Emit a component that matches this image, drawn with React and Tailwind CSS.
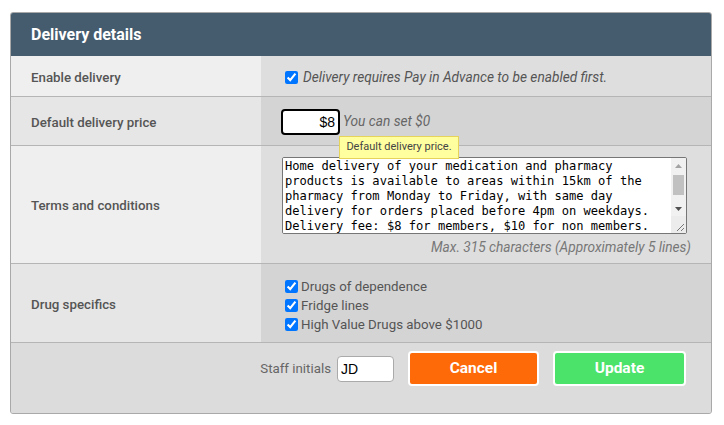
import { useState } from "react";

const terms =
  "Home delivery of your medication and pharmacy products is available to areas within 15km of the pharmacy from Monday to Friday, with same day delivery for orders placed before 4pm on weekdays. Delivery fee: $8 for members, $10 for non members. Orders over $100 are delivered free of charge to all customers.";

const App = () => {
  const [enabled, setEnabled] = useState(true);
  const [price, setPrice] = useState("$8");
  const [text, setText] = useState(terms);
  const [initials, setInitials] = useState("JD");
  const [drugs, setDrugs] = useState({
    dependence: true,
    fridge: true,
    highValue: true,
  });

  const toggle = (key) => setDrugs({ ...drugs, [key]: !drugs[key] });

  return (
    <div className="min-h-[425px] bg-white pt-[12px] pl-[10px] font-['Roboto',sans-serif]">
      <div className="w-[702px] rounded-[3px] border border-[#a9a9a9] overflow-hidden bg-[#dcdcdc]">
        {/* Header */}
        <div className="h-[43px] bg-[#455b6e] flex items-center px-[20px]">
          <h2 className="text-white text-[16px] font-bold">Delivery details</h2>
        </div>

        {/* Enable delivery */}
        <div className="flex h-[41px] border-b border-[#b5b5b5]">
          <div className="w-[250px] bg-[#efefef] flex items-center px-[20px] pt-[3px] text-[13.3px] font-medium text-[#555]">
            Enable delivery
          </div>
          <div className="flex-1 bg-[#dedede] flex items-center pl-[20px] pt-[3px]">
            <input
              type="checkbox"
              checked={enabled}
              onChange={() => setEnabled(!enabled)}
              className="w-[13px] h-[13px] ml-[4px] mr-[5px] accent-[#0075ff]"
            />
            <span className="text-[13.7px] italic text-[#555]">
              Delivery requires Pay in Advance to be enabled first.
            </span>
          </div>
        </div>

        {/* Default delivery price */}
        <div className="flex h-[49px] border-b border-[#b5b5b5]">
          <div className="w-[250px] bg-[#e6e6e6] flex items-center px-[20px] pt-[3px] text-[13.3px] font-medium text-[#555]">
            Default delivery price
          </div>
          <div className="flex-1 bg-[#d4d4d4] flex items-center pl-[20px] pt-[1px]">
            <div className="relative">
              <input
                value={price}
                onChange={(e) => setPrice(e.target.value)}
                className="w-[59px] h-[26px] rounded-[4px] border-2 border-black bg-white text-right pr-[3px] text-[14px] text-black font-['Liberation_Sans',Arial,sans-serif] outline-none"
              />
              <div className="absolute left-[58px] top-[27px] z-10 w-[120px] h-[23px] bg-[#ffffa0] border border-[#e6d45a] flex items-center justify-center text-[11px] text-[#444] whitespace-nowrap">
                Default delivery price.
              </div>
            </div>
            <span className="ml-[3px] text-[13.7px] italic text-[#666]">You can set $0</span>
          </div>
        </div>

        {/* Terms and conditions */}
        <div className="flex h-[118px] border-b border-[#b5b5b5]">
          <div className="w-[250px] bg-[#efefef] flex items-center px-[20px] pt-[2px] text-[13.3px] font-medium text-[#555]">
            Terms and conditions
          </div>
          <div className="flex-1 bg-[#dedede] pl-[21px] pr-[20px] pt-[11px] flex flex-col">
            <div className="w-[405px] h-[77px] border border-[#767676] rounded-[2px] bg-white flex overflow-hidden">
              <textarea
                value={text}
                onChange={(e) => setText(e.target.value)}
                spellCheck={false}
                className="flex-1 h-full resize-none overflow-hidden bg-white px-[2px] py-[1px] text-[12.1px] leading-[15px] text-black font-['DejaVu_Sans_Mono',monospace] outline-none"
              />
              {/* scrollbar */}
              <div className="w-[15px] flex flex-col bg-[#f1f1f1]">
                <div className="h-[15px] flex items-center justify-center">
                  <svg width="7" height="4" viewBox="0 0 7 4">
                    <path d="M3.5 0 L7 4 L0 4 Z" fill="#a3a3a3" />
                  </svg>
                </div>
                <div className="h-[28px] px-[2px] pt-[2px]">
                  <div className="h-[20px] bg-[#c1c1c1]" />
                </div>
                <div className="h-[15px] flex items-center justify-center">
                  <svg width="7" height="4" viewBox="0 0 7 4">
                    <path d="M0 0 L7 0 L3.5 4 Z" fill="#505050" />
                  </svg>
                </div>
                <div className="h-[17px] bg-[#ececec] flex items-end justify-end p-[2px]">
                  <svg width="7" height="7" viewBox="0 0 7 7">
                    <path d="M7 0 L0 7 M7 4 L4 7" stroke="#777" strokeWidth="1" />
                  </svg>
                </div>
              </div>
            </div>
            <p className="text-right text-[13.7px] italic text-[#777] mt-[3px]">
              Max. 315 characters (Approximately 5 lines)
            </p>
          </div>
        </div>

        {/* Drug specifics */}
        <div className="flex h-[79px] border-b border-[#b5b5b5]">
          <div className="w-[250px] bg-[#e6e6e6] flex items-center px-[20px] pt-[4px] text-[13.3px] font-medium text-[#555]">
            Drug specifics
          </div>
          <div className="flex-1 bg-[#d4d4d4] flex flex-col justify-center pl-[20px] pt-[5px]">
            {[
              ["dependence", "Drugs of dependence"],
              ["fridge", "Fridge lines"],
              ["highValue", "High Value Drugs above $1000"],
            ].map(([key, label]) => (
              <label key={key} className="flex items-center h-[19px] text-[13.3px] text-[#555]">
                <input
                  type="checkbox"
                  checked={drugs[key]}
                  onChange={() => toggle(key)}
                  className="w-[13px] h-[13px] ml-[4px] mr-[3px] accent-[#0075ff]"
                />
                {label}
              </label>
            ))}
          </div>
        </div>

        {/* Footer */}
        <div className="h-[70px] bg-[#dcdcdc] flex items-start justify-end pt-[8px] pr-[25px]">
          <div className="flex items-center h-[35px]">
            <span className="text-[13.3px] text-[#666] mr-[6px]">Staff initials</span>
            <input
              value={initials}
              onChange={(e) => setInitials(e.target.value)}
              className="w-[57px] h-[26px] rounded-[4px] border border-[#aaa] bg-white px-[3px] text-[14px] text-black font-['Liberation_Sans',Arial,sans-serif] outline-none"
            />
            <button className="ml-[14px] w-[131px] h-[35px] rounded-[4px] border-2 border-white bg-[#ff6a08] text-white text-[15.5px] font-bold">
              Cancel
            </button>
            <button className="ml-[14px] w-[133px] h-[35px] rounded-[4px] border-2 border-white bg-[#4be36a] text-white text-[15.5px] font-bold">
              Update
            </button>
          </div>
        </div>
      </div>
    </div>
  );
};

export default App;
